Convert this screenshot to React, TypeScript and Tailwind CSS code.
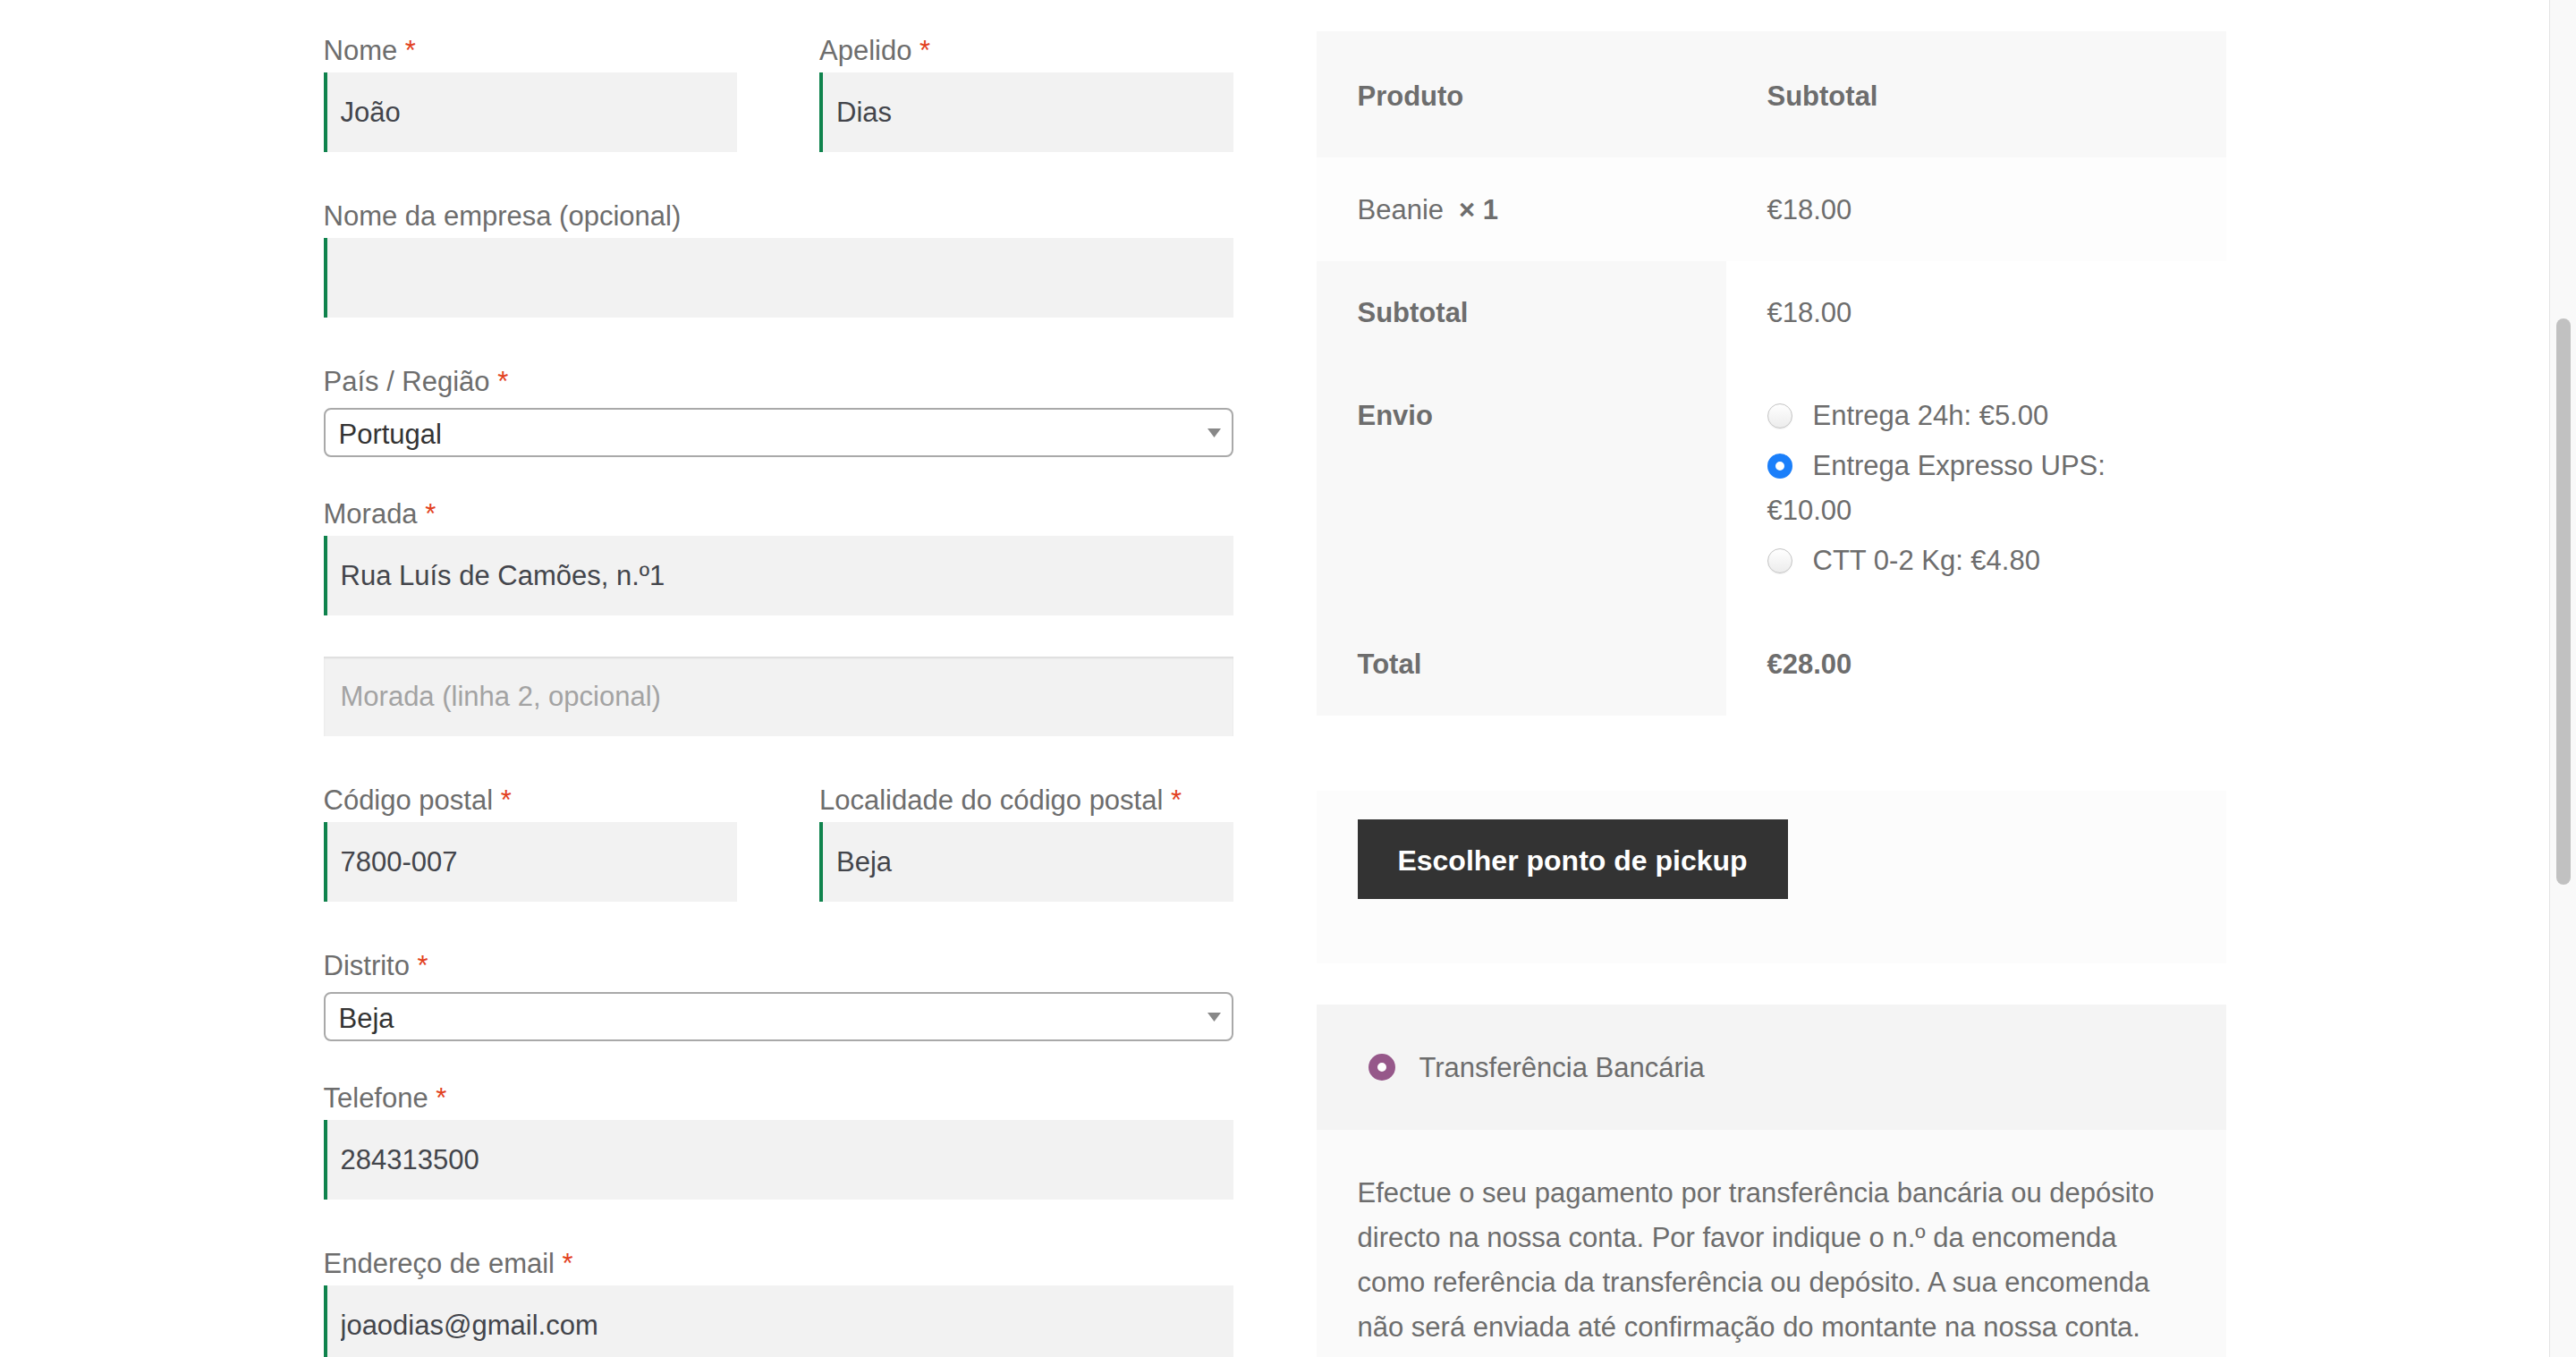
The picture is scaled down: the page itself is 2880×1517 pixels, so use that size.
import React from "react";

type LabelProps = { text: string; required?: boolean };

function Label({ text, required }: LabelProps) {
  return (
    <label className="block h-[49px] leading-[49px] text-[#6d6d6d] whitespace-nowrap">
      {text}
      {required && <span className="text-[#e2401c]"> *</span>}
    </label>
  );
}

function TextInput({ value, placeholder, valid = true }: { value?: string; placeholder?: string; valid?: boolean }) {
  return (
    <input
      readOnly
      defaultValue={value}
      placeholder={placeholder}
      className={
        valid
          ? "block w-full h-[89px] bg-[#f2f2f2] border-l-4 border-[#0f834d] pl-[15px] pr-[19px] text-[#43454b] outline-none"
          : "block w-full h-[89px] bg-[#f2f2f2] pl-[19px] pr-[19px] text-[#43454b] outline-none shadow-[inset_0_2px_2px_rgba(0,0,0,0.09)] placeholder:text-[#a3a3a3]"
      }
    />
  );
}

function SelectBox({ value }: { value: string }) {
  return (
    <div className="mt-[5px] h-[55px] bg-white border-2 border-[#a9a9a9] rounded-[8px] pl-[15px] pr-[12px] flex items-center justify-between text-[#333333]">
      <span className="pt-[5px]">{value}</span>
      <svg width="15" height="10" viewBox="0 0 15 10">
        <path d="M0 0 H15 L7.5 10 Z" fill="#888888" />
      </svg>
    </div>
  );
}

function Radio({ checked }: { checked?: boolean }) {
  return checked ? (
    <span className="inline-block align-middle w-[28px] h-[28px] rounded-full border-[9px] border-[#1b7ffa] bg-white mr-[23px] -mt-[4px]" />
  ) : (
    <span className="inline-block align-middle w-[28px] h-[28px] rounded-full border border-[#c4c4c4] bg-gradient-to-b from-white to-[#ececec] shadow-[0_1px_1px_rgba(0,0,0,0.06)] mr-[23px] -mt-[4px]" />
  );
}

export default function App() {
  return (
    <div className="flex h-[1517px] overflow-hidden bg-white font-['Liberation_Sans',Arial,sans-serif] text-[31px]">
      <main className="flex-1 flex justify-center">
        <div className="grid grid-cols-[1017px_1017px] gap-x-[93px] items-start">
          {/* billing form */}
          <div className="pt-[32px]">
            <div className="grid grid-cols-2 gap-x-[92px] mb-[47px]">
              <div>
                <Label text="Nome" required />
                <TextInput value="João" />
              </div>
              <div>
                <Label text="Apelido" required />
                <TextInput value="Dias" />
              </div>
            </div>
            <div className="mb-[47px]">
              <Label text="Nome da empresa (opcional)" />
              <TextInput value="" />
            </div>
            <div className="mb-[39px]">
              <Label text="País / Região" required />
              <SelectBox value="Portugal" />
            </div>
            <div className="mb-[46px]">
              <Label text="Morada" required />
              <TextInput value="Rua Luís de Camões, n.º1" />
            </div>
            <div className="mb-[47px]">
              <TextInput placeholder="Morada (linha 2, opcional)" valid={false} />
            </div>
            <div className="grid grid-cols-2 gap-x-[92px] mb-[47px]">
              <div>
                <Label text="Código postal" required />
                <TextInput value="7800-007" />
              </div>
              <div>
                <Label text="Localidade do código postal" required />
                <TextInput value="Beja" />
              </div>
            </div>
            <div className="mb-[39px]">
              <Label text="Distrito" required />
              <SelectBox value="Beja" />
            </div>
            <div className="mb-[47px]">
              <Label text="Telefone" required />
              <TextInput value="284313500" />
            </div>
            <div>
              <Label text="Endereço de email" required />
              <TextInput value="joaodias@gmail.com" />
            </div>
          </div>

          {/* order review */}
          <div className="pt-[35px] text-[#6d6d6d]">
            <table className="w-full border-collapse leading-[50px] text-left">
              <thead>
                <tr className="bg-[#f8f8f8]">
                  <th className="w-[458px] pt-[48px] pb-[43px] px-[46px] font-bold">Produto</th>
                  <th className="pt-[48px] pb-[43px] px-[46px] font-bold">Subtotal</th>
                </tr>
              </thead>
              <tbody>
                <tr className="bg-[#fdfdfd]">
                  <td className="pt-[34px] pb-[32px] px-[46px] whitespace-nowrap">
                    Beanie<strong className="ml-[17px] font-bold">×&nbsp;1</strong>
                  </td>
                  <td className="pt-[34px] pb-[32px] px-[46px]">€18.00</td>
                </tr>
              </tbody>
              <tfoot>
                <tr>
                  <th className="bg-[#f8f8f8] pt-[33px] pb-[33px] px-[46px] font-bold">Subtotal</th>
                  <td className="bg-white pt-[33px] pb-[33px] px-[46px]">€18.00</td>
                </tr>
                <tr>
                  <th className="bg-[#f8f8f8] pt-[32px] pb-[32px] px-[46px] font-bold align-top">Envio</th>
                  <td className="bg-white pt-[32px] pb-[32px] px-[46px]">
                    <ul className="flex flex-col gap-[6px]">
                      <li>
                        <Radio />
                        Entrega 24h: €5.00
                      </li>
                      <li>
                        <Radio checked />
                        Entrega Expresso UPS:
                        <br />
                        €10.00
                      </li>
                      <li>
                        <Radio />
                        CTT 0-2 Kg: €4.80
                      </li>
                    </ul>
                  </td>
                </tr>
                <tr>
                  <th className="bg-[#f8f8f8] pt-[34px] pb-[32px] px-[46px] font-bold">Total</th>
                  <td className="bg-white pt-[34px] pb-[32px] px-[46px]">
                    <strong className="font-bold">€28.00</strong>
                  </td>
                </tr>
              </tfoot>
            </table>

            <div className="mt-[84px] bg-[#fcfcfc] pt-[32px] pb-[72px] px-[46px]">
              <button className="w-[481px] h-[89px] bg-[#333333] text-white font-bold text-[32px] pt-[3px]">
                Escolher ponto de pickup
              </button>
            </div>

            <div className="mt-[46px]">
              <div className="h-[140px] bg-[#f4f4f4] pl-[58px] flex items-center leading-[50px]">
                <span className="w-[30px] h-[30px] rounded-full border-[10px] border-[#96588a] bg-white mr-[27px]" />
                <span className="pt-[2px]">Transferência Bancária</span>
              </div>
              <div className="bg-[#fafafa] pt-[46px] px-[46px] pb-[46px] leading-[50px]">
                <p className="whitespace-nowrap">Efectue o seu pagamento por transferência bancária ou depósito</p>
                <p className="whitespace-nowrap">directo na nossa conta. Por favor indique o n.º da encomenda</p>
                <p className="whitespace-nowrap">como referência da transferência ou depósito. A sua encomenda</p>
                <p className="whitespace-nowrap">não será enviada até confirmação do montante na nossa conta.</p>
              </div>
            </div>
          </div>
        </div>
      </main>

      {/* scrollbar */}
      <div className="w-[30px] shrink-0 bg-[#f9f9f9] border-l border-[#e4e4e4] pt-[356px] pl-[7px]">
        <div className="w-[16px] h-[633px] rounded-full bg-[#c1c1c1]" />
      </div>
    </div>
  );
}
